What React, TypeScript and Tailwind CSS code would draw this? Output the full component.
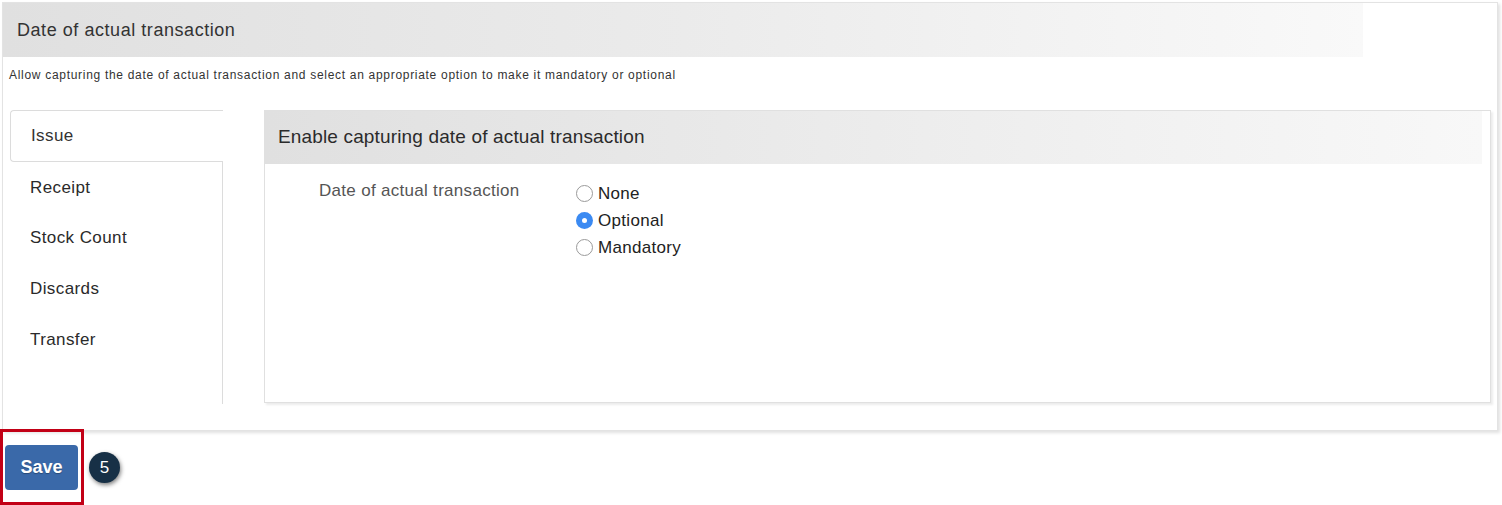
import React from 'react'

const tabs = ['Issue', 'Receipt', 'Stock Count', 'Discards', 'Transfer']
const options = ['None', 'Optional', 'Mandatory']

function Radio({ checked }: { checked: boolean }) {
  return checked ? (
    <span className="flex h-[17px] w-[17px] items-center justify-center rounded-full bg-[#3b8af2]">
      <span className="h-[5px] w-[5px] rounded-full bg-white" />
    </span>
  ) : (
    <span className="h-[17px] w-[17px] rounded-full border border-[#9a9a9a] bg-white" />
  )
}

export default function App() {
  return (
    <div className="relative h-[505px] w-[1502px] bg-white font-['Liberation_Sans',Arial,sans-serif] text-[#333]">
      <div className="ml-[2px] pt-[2px]">
        <div className="w-[1496px] border border-[#e3e3e3] bg-white pb-[26px] shadow-[2px_2px_3px_rgba(0,0,0,0.12)]">
          <div className="flex h-[54px] w-[1360px] items-center bg-gradient-to-r from-[#e0e0e0] via-[#ebebeb] via-50% to-[#f9f9f9] pl-[14px] text-[18px] tracking-[0.55px]">
            Date of actual transaction
          </div>
          <div className="pl-[6px] pt-[11px] text-[12px] leading-[14px] tracking-[0.7px] text-[#333]">
            Allow capturing the date of actual transaction and select an appropriate option to make it mandatory or optional
          </div>

          <div className="mt-[28px] flex">
            <div className="ml-[7px] flex w-[213px] flex-col">
              {tabs.map((t, i) =>
                i === 0 ? (
                  <div
                    key={t}
                    className="flex h-[52px] items-center rounded-l-[4px] border border-r-0 border-[#dcdcdc] pb-[1px] pl-[20px] text-[17px] tracking-[0.4px]"
                  >
                    {t}
                  </div>
                ) : (
                  <div
                    key={t}
                    className="flex h-[50.7px] items-center border-r border-[#dcdcdc] pl-[20px] text-[17px] tracking-[0.4px] text-[#2a2a2a]"
                  >
                    {t}
                  </div>
                )
              )}
              <div className="h-[39px] border-r border-[#dcdcdc]" />
            </div>

            <div className="ml-[41px] flex h-[293px] w-[1227px] flex-col border border-[#e0e0e0] shadow-[2px_2px_2px_rgba(0,0,0,0.08)]">
              <div className="flex h-[53px] w-[1217px] items-center bg-gradient-to-r from-[#e0e0e0] via-[#ececec] via-50% to-[#f8f8f8] pl-[13px] text-[19px] tracking-[0.15px] text-[#2b2b2b]">
                Enable capturing date of actual transaction
              </div>
              <div className="flex pt-[17px]">
                <div className="w-[311px] pl-[54px] text-[17px] leading-[20px] tracking-[0.3px] text-[#555]">
                  Date of actual transaction
                </div>
                <div className="-mt-[1px] flex flex-col">
                  {options.map((o) => (
                    <label key={o} className="flex h-[27px] items-center gap-[5px] text-[17px] tracking-[0.3px] text-[#222]">
                      <Radio checked={o === 'Optional'} />
                      {o}
                    </label>
                  ))}
                </div>
              </div>
            </div>
          </div>
        </div>
      </div>

      <div className="ml-[5px] mt-[14px] flex items-center gap-[11px]">
        <button className="h-[45px] w-[73px] rounded-[4px] bg-[#3a69a9] text-[18px] font-bold text-white [text-shadow:0_1px_1px_rgba(0,0,0,0.3)]">
          Save
        </button>
        <span className="flex h-[31px] w-[31px] items-center justify-center rounded-full bg-[#173046] text-[17px] text-white shadow-[1px_2px_4px_rgba(0,0,0,0.5)]">
          5
        </span>
      </div>

      <div className="absolute left-0 top-[429px] h-[76px] w-[84px] border-[3px] border-[#c20016]" />
    </div>
  )
}
